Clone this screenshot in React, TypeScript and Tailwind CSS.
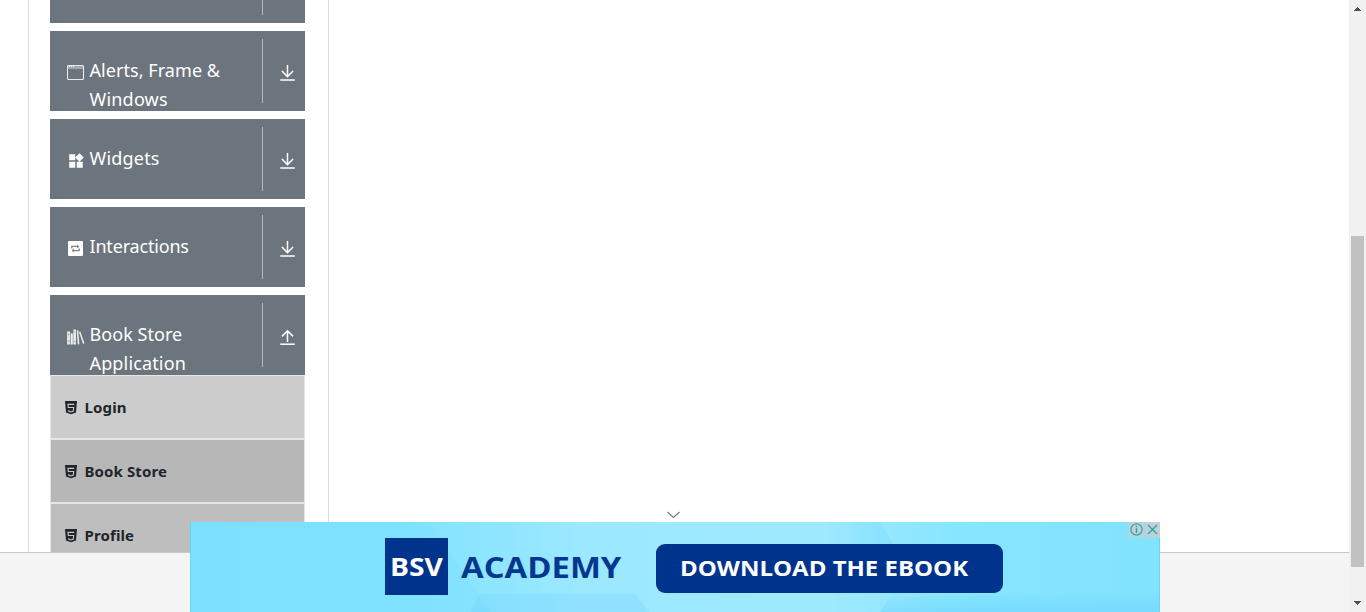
import React from "react";
import { MdWidgets } from "react-icons/md";

const uiFont = "font-['Noto_Sans','Open_Sans',sans-serif]";

function BrowserIcon() {
  return (
    <svg width="18" height="18" viewBox="0 0 18 18" fill="none" stroke="#fff">
      <rect x=".5" y="1.5" width="16" height="14" rx="1" strokeWidth="1.1" opacity=".85" />
      <path d="M1 2.5h15" opacity=".35" />
      <path d="M1 4h15" opacity=".75" />
      <path d="M2 2.5h1M4 2.5h1M6 2.5h1" opacity=".9" />
    </svg>
  );
}

function RepeatIcon() {
  return (
    <svg width="18" height="18" viewBox="0 0 18 18">
      <rect x="1" y="1" width="15" height="15" rx="1" fill="#fff" />
      <path d="M4.8 8.6V6.4h6.2M12.2 8.4v2.2H6" fill="none" stroke="#7b838a" strokeWidth="1.3" />
      <path d="M10.2 4.4l2.2 2-2.2 2zM6.8 8.6l-2.2 2 2.2 2z" fill="#7b838a" />
    </svg>
  );
}

function BooksIcon() {
  return (
    <svg width="18" height="18" viewBox="0 0 18 18" fill="#fff">
      <path d="M0 3.5h3.2v13H0z" opacity=".8" />
      <path d="M3.8 5.5h2v11h-2zM6.4 1.5h2.5v15H6.4z" opacity=".9" />
      <path d="M9.7 2.5l1.5-.4 1.2 14.1-1.7.3zM11.9 4l1.3-.7 4.3 12-1.4.8z" opacity=".85" />
      <path d="M.8 6.5h1.5M.8 13h1.5M7.2 4h1M7.2 13.5h1" stroke="#6c757d" strokeWidth=".8" />
    </svg>
  );
}

function TransferIcon({ up = false }: { up?: boolean }) {
  return (
    <svg width="16" height="18" viewBox="0 0 16 18" fill="none" stroke="#fff" strokeWidth="1.5">
      <path d={up ? "M7.5 14V3M1.9 8.4l5.6-5.6 5.6 5.6" : "M7.5 1v11.5M1.9 7l5.6 5.6L13.1 7"} />
      <path d={up ? "M.2 16.2h14.6" : "M.2 16h14.6"} />
    </svg>
  );
}

function ShieldIcon() {
  return (
    <svg className="mt-px shrink-0" width="12" height="14" viewBox="0 0 12 14">
      <path d="M0 0h12l-1 11.6L6 13.2l-5-1.6z" fill="#212529" />
      <path d="M9.3 3.4H3l.3 3.1h5.4l-.4 3.6-2.3.8-2.3-.8-.1-1" fill="none" stroke="#c6c6c6" strokeWidth="1.1" />
    </svg>
  );
}

function Group({ icon, lines, up }: { icon?: React.ReactNode; lines: { text: string; track: string }[]; up?: boolean }) {
  return (
    <div className="flex h-20 w-[255px] shrink-0 overflow-hidden bg-[#6c757d] text-white">
      <div className="flex w-[212px] pt-[25px] pl-[17px]">
        <div className="mt-2 h-[18px] w-[22.5px] shrink-0">{icon}</div>
        <div className="text-[18px] leading-[29px] whitespace-nowrap">
          {lines.map((l) => (
            <div key={l.text} className={l.track}>{l.text}</div>
          ))}
        </div>
      </div>
      <div className="mt-2 flex h-16 w-[43px] border-l border-[#b5b9bc] pt-[25px] pl-[17px]">
        <TransferIcon up={up} />
      </div>
    </div>
  );
}

function Item({ text, box, track }: { text: string; box: string; track: string }) {
  return (
    <div className={`flex h-16 shrink-0 items-center border border-[#e4e6e9] pl-[14px] ${box}`}>
      <ShieldIcon />
      <span className={`ml-[7.5px] text-[15px] leading-6 font-bold whitespace-nowrap text-[#212529] ${track}`}>{text}</span>
    </div>
  );
}

function Banner() {
  return (
    <div className="relative flex h-[90px] w-[970px] overflow-hidden bg-[linear-gradient(90deg,#7ce0ff_0%,#7ee2ff_20%,#9be8ff_40%,#a0eaff_65%,#86e5ff_80%,#82e3ff_100%)] font-['Open_Sans','Noto_Sans',sans-serif]">
      <svg className="absolute inset-0" width="970" height="90" viewBox="0 0 970 90">
        <defs>
          <linearGradient id="low" x1="0" y1="0" x2="0" y2="1">
            <stop offset="0" stopColor="#5fcaff" stopOpacity="0" />
            <stop offset="1" stopColor="#5fcaff" stopOpacity=".35" />
          </linearGradient>
          <linearGradient id="beam" x1="0" x2="1">
            <stop offset="0" stopColor="#66cfff" stopOpacity="0" />
            <stop offset="1" stopColor="#66cfff" stopOpacity=".3" />
          </linearGradient>
          <linearGradient id="haze" x1="0" x2="1">
            <stop offset="0" stopColor="#62d4ff" stopOpacity="0" />
            <stop offset="1" stopColor="#62d4ff" stopOpacity=".16" />
          </linearGradient>
        </defs>
        <path d="M150 0h90l60 90H150z" fill="url(#haze)" />
        <path d="M290 72h155l14 18H280z" fill="#65caff" opacity=".2" />
        <path d="M630 0h60l30 50H650z" fill="url(#beam)" />
        <path d="M700 75l270-5v20H690z" fill="url(#low)" />
        <path d="M0 0v90" stroke="#64d5f6" strokeWidth="2" />
        <path d="M969.5 16v74" stroke="#69d5f5" />
      </svg>
      <div className="relative mt-4 ml-[195px] flex h-[57px] w-[63px] items-center justify-center bg-[#00338c] text-[25px] leading-none font-bold text-white">
        <span className="block scale-x-[1.13]">BSV</span>
      </div>
      <div className="relative mt-[25px] ml-[13px] w-[195px] text-[29px] leading-[40px] font-bold whitespace-nowrap text-[#04388f]">
        <span className="block origin-left scale-x-[1.132]">ACADEMY</span>
      </div>
      <div className="relative mt-[21.5px] flex h-[49px] w-[347px] items-center rounded-[9px] bg-[#00338c] pb-px pl-[24px] text-[21.5px] leading-none font-bold whitespace-nowrap text-white">
        <span className="block origin-left scale-x-[1.115]">DOWNLOAD THE EBOOK</span>
      </div>
      <div className="absolute top-0 right-0 flex gap-px">
        <svg className="bg-[#c8cdcf]" width="15" height="15" viewBox="0 0 15 15" fill="none" stroke="#16aebf">
          <circle cx="7.5" cy="7.5" r="5.6" strokeWidth="1.2" />
          <path d="M7.5 6.3v4.7M7.5 3.8v1.5" strokeWidth="1.5" />
        </svg>
        <svg className="bg-[#c8cdcf]" width="15" height="15" viewBox="0 0 15 15" fill="none" stroke="#16aebf">
          <path d="M3 3l9 9M12 3l-9 9" strokeWidth="1.4" />
        </svg>
      </div>
    </div>
  );
}

export default function App() {
  return (
    <div className={`relative flex h-[612px] w-[1366px] overflow-hidden bg-white ${uiFont}`}>
      <div className="flex w-[1349px] flex-col">
        <main className="flex h-[552px] overflow-hidden pl-7">
          <div className="flex w-[301px] flex-col border-x border-[#dcdcdc] pl-[21px]">
            <div className="-mt-[57px] flex w-[255px] flex-col gap-2">
              <Group lines={[]} />
              <Group icon={<BrowserIcon />} lines={[{ text: "Alerts, Frame &", track: "tracking-[0.06px]" }, { text: "Windows", track: "tracking-[0.2px]" }]} />
              <Group icon={<MdWidgets size={18} className="-ml-[0.5px] -mt-[0.5px]" />} lines={[{ text: "Widgets", track: "tracking-[0.2px]" }]} />
              <Group icon={<RepeatIcon />} lines={[{ text: "Interactions", track: "tracking-[-0.18px]" }]} />
              <Group up icon={<BooksIcon />} lines={[{ text: "Book Store", track: "tracking-[0.05px]" }, { text: "Application", track: "tracking-[0.15px]" }]} />
            </div>
            <div className="flex w-[255px] flex-col">
              <Item text="Login" box="bg-[#cccccc]" track="tracking-[0.15px]" />
              <Item text="Book Store" box="bg-[#b7b7b7]" track="tracking-[0.1px]" />
              <Item text="Profile" box="bg-[#bebebe]" track="tracking-[0.12px]" />
            </div>
          </div>
        </main>
        <footer className="h-[60px] border-t border-[#c8c8c8] bg-[#f4f4f4]" />
      </div>
      <div className="flex w-[17px] flex-col items-center bg-[#f1f1f1]">
        <svg width="17" height="17" viewBox="0 0 17 17" fill="#505050" shapeRendering="crispEdges">
          <path d="M8 7h1v1h1v1h1v1h1v1H5v-1h1V9h1V8h1z" />
        </svg>
        <div className="mt-[219px] h-[331px] w-[13px] bg-[#c1c1c1]" />
        <svg className="mt-7" width="17" height="17" viewBox="0 0 17 17" fill="#505050" shapeRendering="crispEdges">
          <path d="M5 6h7v1h-1v1h-1v1H9v1H8V9H7V8H6V7H5z" />
        </svg>
      </div>
      <div className="absolute bottom-0 left-[190px] flex w-[970px] flex-col">
        <svg className="ml-[476px]" width="15" height="12" viewBox="0 0 15 12" fill="none" stroke="#777">
          <path d="M1.5 2l6 5.5 6-5.5" strokeWidth="1.1" />
        </svg>
        <Banner />
      </div>
    </div>
  );
}
